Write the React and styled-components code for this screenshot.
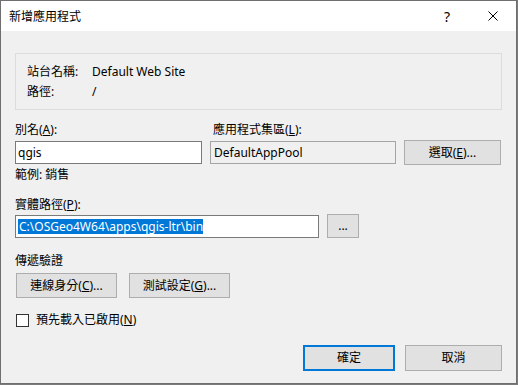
import React from 'react';
import styled, { createGlobalStyle } from 'styled-components';

const GlobalStyle = createGlobalStyle`
  html, body { margin:0; padding:0; background:#7b7b7b; }
  body {
    font-family: "Noto Sans", "Noto Sans CJK TC", sans-serif;
    font-size:12px;
    color:#000;
  }
  * { box-sizing:border-box; }
`;

const Window = styled.div`
  width:517px;
  height:384px;
  border:1px solid #6f6f6f;
  background:#f0f0f0;
  display:flex;
  flex-direction:column;
`;

const TitleBar = styled.div`
  height:30px;
  background:#fff;
  display:flex;
  align-items:center;
  flex-shrink:0;
`;

const Title = styled.div`
  flex:1;
  padding-left:8px;
  line-height:16px;
  padding-top:1px;
`;

const CaptionButton = styled.div`
  width:46px;
  height:30px;
  display:flex;
  align-items:center;
  justify-content:center;
  font-size:14px;
`;

const Body = styled.div`
  padding:22px 14px 0 14px;
  display:flex;
  flex-direction:column;
`;

const InfoBox = styled.div`
  height:57px;
  border:1px solid #dcdcdc;
  padding:8px 0 0 11px;
`;

const InfoRow = styled.div`
  display:grid;
  grid-template-columns:65px auto;
  line-height:20px;
`;

const FieldGrid = styled.div`
  display:grid;
  grid-template-columns:187px 186px 97px;
  column-gap:8px;
  margin-top:12px;
  align-items:center;
`;

const Label = styled.div`
  line-height:16px;
  margin-bottom:${({ $mb }) => $mb ?? 2}px;
  padding-left:${({ $pl }) => $pl ?? 0}px;
  white-space:nowrap;
`;

const TextBox = styled.div`
  height:23px;
  border:1px solid ${({ $readOnly }) => ($readOnly ? '#a5a5a5' : '#7a7a7a')};
  background:${({ $readOnly }) => ($readOnly ? '#f0f0f0' : '#fff')};
  padding:0 ${({ $readOnly }) => ($readOnly ? 3 : 2)}px;
  line-height:21px;
  width:${({ $w }) => ($w ? `${$w}px` : 'auto')};
  white-space:nowrap;
  overflow:hidden;
`;

const Selected = styled.span`
  background:#0078d7;
  color:#fff;
  display:inline-block;
  line-height:15px;
  padding:0 0 0 1px;
`;

const Button = styled.div`
  height:${({ $h }) => $h ?? 25}px;
  width:${({ $w }) => ($w ? `${$w}px` : 'auto')};
  background:#e1e1e1;
  border:${({ $default }) => ($default ? '2px solid #0078d7' : '1px solid #adadad')};
  display:flex;
  align-items:center;
  justify-content:center;
  line-height:16px;
  white-space:nowrap;
`;

const Hint = styled.div`
  line-height:16px;
  margin-top:2px;
`;

const Section = styled.div`
  margin-top:${({ $mt }) => $mt}px;
`;

const Row = styled.div`
  display:flex;
  align-items:center;
  gap:${({ $gap }) => $gap}px;
  padding-left:${({ $pl }) => $pl ?? 0}px;
`;

const CheckBox = styled.div`
  width:13px;
  height:13px;
  border:1px solid #333;
  background:#fff;
`;

const Footer = styled.div`
  display:flex;
  justify-content:flex-end;
  gap:10px;
  margin-top:17px;
`;

const Key = styled.u`
  text-underline-offset:1px;
`;

export default function App() {
  return (
    <>
      <GlobalStyle />
      <Window>
        <TitleBar>
          <Title>新增應用程式</Title>
          <CaptionButton>?</CaptionButton>
          <CaptionButton>
            <svg width="10" height="10" viewBox="0 0 10 10">
              <path d="M0.5 0.5 L9.5 9.5 M9.5 0.5 L0.5 9.5" stroke="#000" strokeWidth="1" fill="none" />
            </svg>
          </CaptionButton>
        </TitleBar>
        <Body>
          <InfoBox>
            <InfoRow>
              <span>站台名稱:</span>
              <span>Default Web Site</span>
            </InfoRow>
            <InfoRow>
              <span>路徑:</span>
              <span>/</span>
            </InfoRow>
          </InfoBox>

          <FieldGrid>
            <Label>別名(<Key>A</Key>):</Label>
            <Label $pl={3}>應用程式集區(<Key>L</Key>):</Label>
            <div />
            <TextBox>qgis</TextBox>
            <TextBox $readOnly>DefaultAppPool</TextBox>
            <Button>選取(<Key>E</Key>)...</Button>
          </FieldGrid>
          <Hint>範例: 銷售</Hint>

          <Section $mt={14}>
            <Label $mb={1}>實體路徑(<Key>P</Key>):</Label>
            <Row $gap={8}>
              <TextBox $w={304}>
                <Selected>C:\OSGeo4W64\apps\qgis-ltr\bin</Selected>
              </TextBox>
              <Button $w={32} $h={24}>...</Button>
            </Row>
          </Section>

          <Section $mt={15}>
            <Label $mb={4}>傳遞驗證</Label>
            <Row $gap={12} $pl={1}>
              <Button $w={101} $h={25}>連線身分(<Key>C</Key>)...</Button>
              <Button $w={101} $h={25}>測試設定(<Key>G</Key>)...</Button>
            </Row>
          </Section>

          <Section $mt={14}>
            <Row $gap={7} $pl={1}>
              <CheckBox />
              <Label $mb={0}>預先載入已啟用(<Key>N</Key>)</Label>
            </Row>
          </Section>

          <Footer>
            <Button $w={92} $h={26} $default>確定</Button>
            <Button $w={97} $h={26}>取消</Button>
          </Footer>
        </Body>
      </Window>
    </>
  );
}
